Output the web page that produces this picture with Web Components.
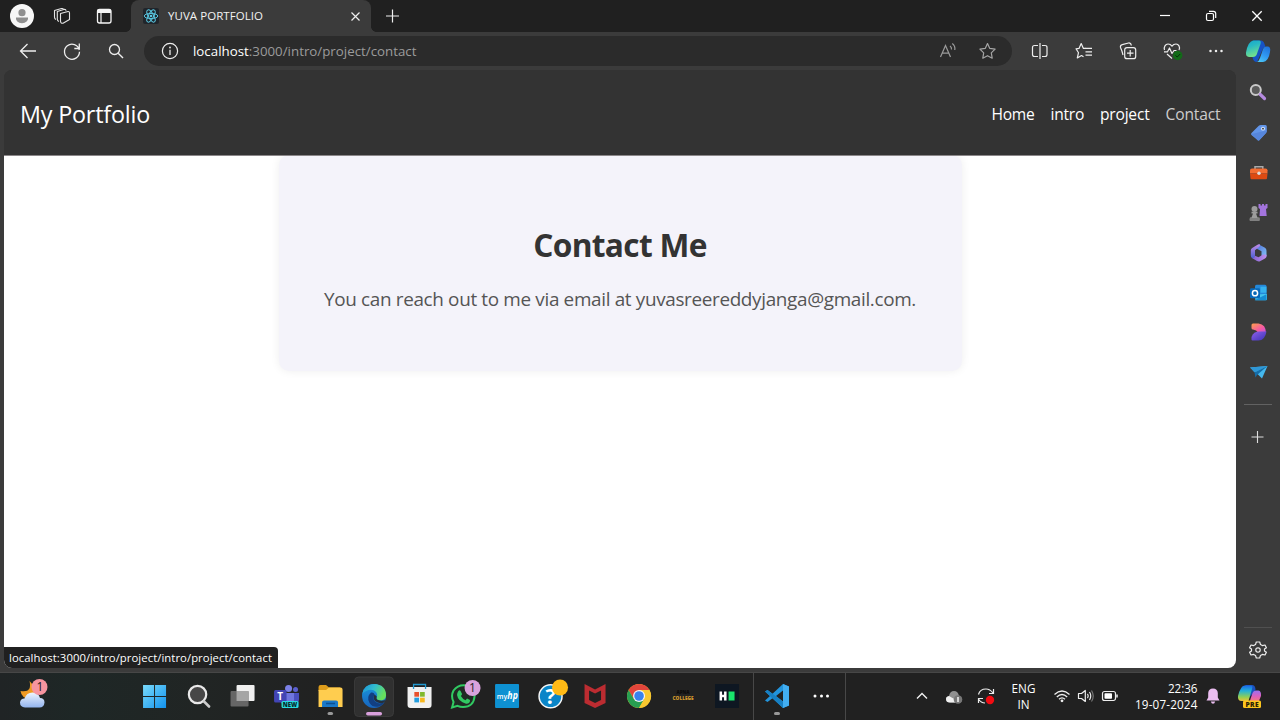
<!DOCTYPE html>
<html lang="en">
<head>
<meta charset="utf-8">
<title>YUVA PORTFOLIO</title>
<style>
html,body{margin:0;height:100%;overflow:hidden;background:#3b3b3b}
body{font-family:"Open Sans","Noto Sans",sans-serif}
</style>
</head>
<body>
<desktop-screen></desktop-screen>
<script>
const ICONS = {
  avatar:`<circle r="12" fill="#f7f7f7"/><circle cy="-3.3" r="3.6" fill="#8f8f8f"/><path d="M-6 1.6h12c.4 3-2 5.6-6 5.6s-6.400-2.600-6-5.600z" fill="#8f8f8f"/>`,
  workspaces:`<g fill="none" stroke="#e4e4e4" stroke-width="1.1" stroke-linejoin="round"><path d="M-1.500-2.500L6-4.500Q7.500-4.700 7.500-3V3.500L1 7.300Q-1.500 7.500-1.500 5z"/><path d="M-3 5.500Q-4.700 5-4.700 3V-4.500L2.500-6.700Q4-6.700 4-5.300"/><path d="M-6 3.500Q-7.500 3-7.500 1V-5.500L-.5-7.500Q1-7.700 1.500-7"/></g>`,
  tabpane:`<rect x="-6.500" y="-6.500" width="13.500" height="13.500" rx="2" fill="none" stroke="#f5f5f5" stroke-width="1.300"/><path d="M-6.500-6.500h13.500v3.500h-13.500z" fill="#f5f5f5"/><path d="M-3-3v10" stroke="#f5f5f5" stroke-width="1.200"/>`,
  react:`<rect x="-8" y="-8" width="16" height="16" rx="2" fill="#20252b"/><g fill="none" stroke="#5ac8e2" stroke-width="1"><ellipse rx="6.800" ry="2.600"/><ellipse rx="6.800" ry="2.600" transform="rotate(60)"/><ellipse rx="6.800" ry="2.600" transform="rotate(120)"/></g><circle r="1.300" fill="#5ac8e2"/>`,
  closetab:`<path d="M-3.500-3.500l8 8M-3.500 4.500l8-8" stroke="#eee" stroke-width="1.200"/>`,
  plus:`<path d="M-6.500 0h13M0-6.500v13" stroke="#eee" stroke-width="1.200"/>`,
  min:`<path d="M-5-.5h10" stroke="#fff" stroke-width="1.200"/>`,
  restore:`<g fill="none" stroke="#fff" stroke-width="1.200"><rect x="-4.500" y="-2.500" width="7" height="7" rx="1.500"/><path d="M-2-4.700H2.500Q4.700-4.700 4.700-2.500V2"/></g>`,
  close:`<path d="M-4.700-4.700l9.400 9.400M4.700-4.700l-9.400 9.400" stroke="#fff" stroke-width="1.300"/>`,
  back:`<path d="M8 0H-7.500M-.500-7L-7.500 0L-.500 7" fill="none" stroke="#eee" stroke-width="1.300"/>`,
  refresh:`<path d="M7.300-1A7.500 7.500 0 1 0 7.500.800M7.300-7.500V-2.500H2.300" fill="none" stroke="#eee" stroke-width="1.300"/>`,
  search:`<circle cx="-1.500" cy="-1.500" r="5" fill="none" stroke="#eee" stroke-width="1.300"/><path d="M2.200 2.200L7 7" stroke="#eee" stroke-width="1.400"/>`,
  info:`<circle r="7.600" fill="none" stroke="#eee" stroke-width="1.200"/><path d="M0-1.200V4" stroke="#eee" stroke-width="1.300"/><circle cy="-3.500" r=".9" fill="#eee"/>`,
  read:`<g fill="none" stroke="#9b9b9b" stroke-width="1.200"><path d="M-8 6L-3-5.500L2 6M-6.300 2.200H.300"/><path d="M1.500-5Q3.300-3.700 3-1.500M3.800-7.500Q7-5 6.300-1"/></g>`,
  star:`<path d="M0-7.500L2.300-2.600L7.600-1.900L3.800 1.900L4.700 7.200L0 4.700L-4.700 7.200L-3.800 1.900L-7.600-1.900L-2.300-2.600Z" fill="none" stroke="#a5a5a5" stroke-width="1.200" stroke-linejoin="round"/>`,
  split:`<g fill="none" stroke="#eee" stroke-width="1.200"><path d="M-2-5.500H-5.500Q-7.500-5.500-7.500-3.500V3.500Q-7.500 5.500-5.500 5.500H-2M2-5.500H5Q7-5.500 7-3.500V3.500Q7 5.500 5 5.500H2M0-8V8"/></g>`,
  favs:`<path d="M1.500-2.600L-.6-2.600L-2.800-7.500L-5-2.600L-8-2.200L-5.500 1.700L-6.700 7L-2.500 4.500L-.5 5.700" fill="none" stroke="#eee" stroke-width="1.200" stroke-linejoin="round"/><path d="M1-2.600H8M1.500.800H8M1.500 4.200H8" stroke="#eee" stroke-width="1.200"/>`,
  collections:`<g fill="none" stroke="#eee" stroke-width="1.200"><rect x="-3.300" y="-3.300" width="11" height="11" rx="2.300"/><path d="M2.200-1V5.500M-1 2.200H5.500"/><path d="M-5 4Q-6-.5-7.500-3.500Q-8-5.800-5.800-6.300L.5-8Q3-8.300 3.300-5.500"/></g>`,
  health:`<g fill="none" stroke="#eee" stroke-width="1.200" stroke-linejoin="round"><path d="M-7.500-1C-8.500-4-6.500-7-4-7Q-1.500-7 0-4.800Q1.500-7 4-7C6.500-7 8.500-4 7-1"/><path d="M-8 .800H-4.500L-2.500-3L0 2.500L2-.5H4.500M-5 3L0 7.500"/></g><circle cx="5.700" cy="4.500" r="4.700" fill="#126b18"/><path d="M3.500 4.500l1.700 1.500L8.200 3" fill="none" stroke="#052d08"/>`,
  dots:`<g fill="#eee"><circle cx="-5.500" r="1.250"/><circle r="1.250"/><circle cx="5.500" r="1.250"/></g>`,
  copilot:`<defs><linearGradient id="a" x1="0" y1="0" x2=".3" y2="1"><stop stop-color="#16a6cc"/><stop offset=".4" stop-color="#28b8c4"/><stop offset="1" stop-color="#73e08b"/></linearGradient><linearGradient id="b" x1=".7" y1="0" x2=".2" y2="1"><stop stop-color="#2174dc"/><stop offset=".5" stop-color="#2f97f2"/><stop offset="1" stop-color="#4bc6f6"/></linearGradient></defs><path d="M-4.500-10.500H3Q5.500-10.500 6.500-7L7.500-4.500L5-2.500L-1 11Q-4.500 11-5.500 6.500Z" fill="#1652c4"/><path d="M-5-10.500H1Q3.500-10.500 2.500-7L-1.500 4Q-2.500 6-5 6H-9Q-12.500 5.500-12 1.500Q-10-9.500-5-10.500Z" fill="url(#a)"/><path d="M8-4.500H10Q13-4 12 1Q10.500 10.500 5 11H-1Q1 10 2 7L5-2Q6-4.500 8-4.500Z" fill="url(#b)"/>`,
  ssearch:`<circle cx="-2.700" cy="-2" r="5" fill="#5a5a5a" stroke="#c9c9c9" stroke-width="2"/><path d="M1.800 2.500L6 6.500" stroke="#b58ae0" stroke-width="3.200" stroke-linecap="round"/>`,
  tag:`<path d="M-7 1L0-6Q1-7 2.500-7H7Q8.300-7 8.300-5.500V-1Q8.300 0 7.500 1L1 8Q0 9-1 8L-7 3Q-8 2-7 1Z" fill="#6295e8"/><path d="M-7 2L8.300-1.500Q8.300 0 7.500 1L1 8Q0 9-1 8Z" fill="#5686dc"/><circle cx="4.500" cy="-3.300" r="1.900" fill="#dce9ff"/><circle cx="4.500" cy="-3.300" r=".9" fill="#333"/>`,
  toolbox:`<path d="M-3.500-3V-5.300H4.300V-3" fill="none" stroke="#aaa" stroke-width="1.500"/><path d="M-8.500-1.800Q-8.500-3.500-6.500-3.500H7Q9-3.500 9-1.800V1.500H-8.500Z" fill="#f36d32"/><path d="M-8.500 1.500H9L8.500 6.300Q8.500 7.300 7.500 7.300H-7Q-8 7.300-8 6.300Z" fill="#dd4a12"/><circle cx=".5" cy="1.300" r="1.700" fill="#ddd"/>`,
  chess:`<path d="M1-8h2v1.500h1.500V-8h2v1.500H8V-8h2V-4L8.500-3L9.200 4H2L2.500-3L1-4Z" fill="#a374dd" transform="translate(-1)"/><g fill="#9c9c9c"><circle cx="-4" cy="-3" r="3"/><path d="M-7-.2H-1V1.500H-2.500L-1 5.500H1Q1.500 9 .5 9H-8Q-9.500 9-8.500 5.500H-7L-5.500 1.500H-7Z"/></g><path d="M-8.500 6H.5V9H-8.500Z" fill="#808080"/>`,
  m365:`<defs><linearGradient id="a" x2="0" y2="1"><stop stop-color="#c08be8"/><stop offset="1" stop-color="#4a5fd0"/></linearGradient><linearGradient id="c" x2="1" y2="1"><stop stop-color="#4c6cd8"/><stop offset="1" stop-color="#84c4f5"/></linearGradient><linearGradient id="b" x2="1"><stop stop-color="#8460d0"/><stop offset="1" stop-color="#bd90ec"/></linearGradient></defs><g transform="translate(0 .7)"><path d="M0-8.500L6.500-5Q8-4 8-2V3.500Q6 5 3 3V-1.500L-2.500-4.500Z" fill="url(#c)"/><path d="M1.500-8.300Q2-6.500 0-5.200L-3.500-2.500V3.500Q-4 7-6.500 5.300Q-7.700 4.500-7.700 2.500V-2.500Q-7.700-4 -6.300-4.800L-1-8Q.5-8.700 1.500-8.300Z" fill="url(#a)"/><path d="M-6.500 5.300Q-4 6-3.500 3L0 4.500L4.500 1.800L8 2V3.500Q8 5 6.500 5.800L1.500 8.500Q0 9-1.500 8.300Z" fill="url(#b)"/></g>`,
  outlook:`<g transform="translate(0 .7)"><rect x="-3.500" y="-8" width="11.500" height="13" rx="1.500" fill="#2489da"/><path d="M2-6H8V0H2Z" fill="#35b2ef"/><path d="M-4 2L8.500 1V6.500Q8.500 7.500 7 7.500H-3Z" fill="#42c2ed"/><path d="M-4 7.500L8 1.500V7.500Z" fill="#158dd4"/><rect x="-8.500" y="-4.500" width="10" height="10" rx="1.200" fill="#0869b9"/><circle cx="-3.500" cy=".5" r="2.600" fill="none" stroke="#fff" stroke-width="1.500"/></g>`,
  designer:`<defs><linearGradient id="a" x2="1" y2="1"><stop stop-color="#ff9f4a"/><stop offset=".6" stop-color="#f458a4"/><stop offset="1" stop-color="#bd54df"/></linearGradient><linearGradient id="b" x2="1" y2="1"><stop stop-color="#8c61ea"/><stop offset="1" stop-color="#3c31b5"/></linearGradient></defs><path d="M-7-7Q-7-8.500-5.500-8.500H0Q7.500-7.500 7.500 1H0Q-2-2.200-5.500-2.500Q-7-2.500-7-4Z" fill="url(#a)"/><path d="M-7 7.500V5Q-5-.5 1-.5H8Q6.500 8.500 0 8.500H-6Q-7 8.500-7 7.500Z" fill="url(#b)"/>`,
  drop:`<path d="M-8.500-4.500L9-6L3.500 6.500L-1 2Z" fill="#45b8ed"/><path d="M-8.500-4.500L9-6L-4 .5Z" fill="#2f97d6"/><path d="M-4 .5L9-6L-1.500 3L-3 5.500Z" fill="#156da8"/>`,
  splus:`<path d="M-6 0H6M0-6V6" stroke="#ddd" stroke-width="1.100"/>`,
  gear:`<path d="M-1.700-8H1.700L2.500-5.400L4.300-4.400L7-5L8.400-2.200L6.500-.900V.900L8.400 2.200L7 5L4.300 4.400L2.500 5.400L1.700 8H-1.700L-2.500 5.400L-4.300 4.400L-7 5L-8.400 2.200L-6.500.900V-.900L-8.400-2.200L-7-5L-4.300-4.400L-2.500-5.400Z" fill="none" stroke="#eee" stroke-width="1.200" stroke-linejoin="round"/><circle r="2.200" fill="none" stroke="#eee" stroke-width="1.200"/>`,
  weather:`<defs><linearGradient id="a" x2="0" y2="1"><stop stop-color="#eef5ff"/><stop offset="1" stop-color="#93b4ee"/></linearGradient></defs><path d="M-3-15Q0-3-12-5Q-11 2-3 3Q6 1 4-7Z" fill="#ef9b25"/><path d="M-7.500 11.500Q-12.500 11-12.500 6.500Q-12 2.500-8 2.500Q-6-3.500 0-3.500Q6-3.500 7.500 2Q12 2 12 6.500Q11.500 11.500 7 11.500Z" fill="url(#a)"/><circle cx="7" cy="-9" r="8" fill="#f7949f"/><text x="7.500" y="-4.800" font-size="12" text-anchor="middle" fill="#1a1a1a">1</text>`,
  windows:`<defs><linearGradient id="a" gradientUnits="userSpaceOnUse" x1="-12" y1="-11" x2="12" y2="12"><stop stop-color="#7bdcfb"/><stop offset="1" stop-color="#1292ee"/></linearGradient></defs><path d="M-11-11H0V0H-11ZM1-11H12V0H1ZM-11 1H0V12H-11ZM1 1H12V12H1Z" fill="url(#a)"/>`,
  tsearch:`<circle cx="-.5" cy="-1.500" r="8.700" fill="#474747" stroke="#e9e9e9" stroke-width="2.200"/><path d="M6 5.500L11 10.500" stroke="#ccc" stroke-width="2.600" stroke-linecap="round"/>`,
  taskview:`<rect x="-5.500" y="-11" width="18" height="16" rx="1" fill="#f0f0f0"/><rect x="-11.500" y="-5" width="18" height="15.500" rx="1" fill="#666"/><path d="M-5.500-5H6.500V5H-5.500Z" fill="#a5a5a5"/>`,
  teams:`<circle cx="2.500" cy="-7.500" r="3.500" fill="#7b80e6"/><circle cx="9.500" cy="-6.500" r="2.500" fill="#5b60cf"/><path d="M3-3H13V3Q13 8 8 8H3Z" fill="#4a4fbd"/><path d="M-5-3H8V4Q8 10 1 10Q-5 10-5 4Z" fill="#7076de"/><rect x="-12" y="-6" width="12.500" height="12.500" rx="1.500" fill="#4245b5"/><text x="-5.800" y="3.800" font-size="10" font-weight="700" fill="#fff" text-anchor="middle">T</text><rect x="-4.500" y="5" width="17" height="7" rx="1.500" fill="#2adbe0"/><text x="4" y="10.800" font-size="6" font-weight="800" fill="#062a2c" text-anchor="middle">NEW</text>`,
  explorer:`<path d="M-11.500-9Q-11.500-11-9.500-11H-4L-1-8.500H10V-5H-11.500Z" fill="#dd9c1b"/><path d="M-11.500-6H-4L-1-8.500H10.500Q12.500-8.500 12.500-6.500V11H-11.500Z" fill="#ffcd4f"/><path d="M-8 11V6.500Q-8 4.500-6 4.500H6Q8 4.500 8 6.500V11Z" fill="#1a78c8"/><path d="M-4 7.500H5" stroke="#0c4f92" stroke-width="1.500"/><rect x="-2.500" y="16" width="5.500" height="3" rx="1.500" fill="#999"/>`,
  edge:`<defs><linearGradient id="a" x2="1" y2=".4"><stop stop-color="#1b91d8"/><stop offset=".5" stop-color="#31bcd0"/><stop offset="1" stop-color="#67df5c"/></linearGradient><linearGradient id="b" x2="0" y2="1"><stop stop-color="#1a98dd"/><stop offset="1" stop-color="#1764bd"/></linearGradient></defs><rect x="-19.500" y="-19" width="39" height="39.500" rx="4" fill="#303030" stroke="#3a3a3a"/><circle r="12" fill="url(#b)"/><path d="M-11.800-2Q-10-12 0-12Q12-11.500 12-.500Q11.500 4.500 6 4.500Q1.500 4 2.500 1.500Q4-1 2-4Q-2-8-8-5Q-11-3.500-11.800-2Z" fill="url(#a)"/><path d="M-3-3.500Q-8 1-4.500 7Q-1 12 5 10.500Q9 9 10.500 6.300Q4 9 .5 5Q-1.500 2 .5-1.500Q0-4-3-3.500Z" fill="#123f82"/><path d="M.5-1.500Q-1.500 2 1 5Q5 8.500 10.500 6.300L11.500 4Q6 5.500 3 3.500Q2 2.500 2.700.5Z" fill="#24303f"/><rect x="-8" y="16" width="16" height="3.500" rx="1.700" fill="#d9a0dc"/>`,
  store:`<path d="M-11.500-9H12.500V9Q12.500 12 9.500 12H-8.500Q-11.500 12-11.500 9Z" fill="#f0f0f0"/><path d="M-5.500-7V-11.500H6.500V-7" fill="none" stroke="#2399d0" stroke-width="1.300"/><path d="M-4.700-4H0V.7H-4.700Z" fill="#e8502b"/><path d="M1-4H5.700V.7H1Z" fill="#80b82b"/><path d="M-4.700 1.700H0V6.400H-4.700Z" fill="#229cdd"/><path d="M1 1.700H5.700V6.400H1Z" fill="#f6b71e"/>`,
  whatsapp:`<path d="M-11 11.500L-9.500 6Q-12.500 0-9.500-5.500Q-5.500-11 1-10.800Q11.500-9.500 11.500.5Q10.500 11 0 11Q-3 11-5.500 9.800Z" fill="#202a24" stroke="#31ca62" stroke-width="2"/><path d="M-5-4.500Q-3.500-6.500-2.500-5L-1-2Q-1.200-1-2.200 0Q-.5 3 2.500 4.200L4 2.500L7 4Q7 8 3 7.700Q-5 5.500-6-1Q-6-3-5-4.500Z" fill="#31ca62"/><circle cx="9.500" cy="-8" r="8" fill="#d9a2dd"/><text x="9.500" y="-3.800" font-size="12" text-anchor="middle" fill="#242424">1</text>`,
  myhp:`<rect x="-12" y="-12" width="24" height="24" rx="1" fill="#0e91d2"/><text x="-10.200" y="2.500" font-size="7" font-weight="600" fill="#fff">my</text><text x=".3" y="3" font-size="11" font-style="italic" font-weight="700" fill="#fff" textLength="10.500" lengthAdjust="spacingAndGlyphs">hp</text>`,
  help:`<circle cx="-.5" cy=".3" r="11.500" fill="#0985c8" stroke="#f5f5f5" stroke-width="1.500"/><text x="-.5" y="8" font-size="21" font-weight="700" text-anchor="middle" fill="#fff">?</text><circle cx="9" cy="-8.500" r="8" fill="#ffba16"/>`,
  mcafee:`<path d="M-10.500-12L0-6.500L10.500-12V7L0 12L-10.500 7ZM-6-5.500V4L0 7L6 4V-5.500L0-2.500Z" fill="#bc2c31" fill-rule="evenodd"/>`,
  chrome:`<circle r="12" fill="#f6c52d"/><path d="M-10.400-6A12 12 0 0 1 10.400-6H0L-5.200 3Z" fill="#e2453b"/><path d="M-10.400-6A12 12 0 0 0 0 12L5.200 3L-5.200 3Z" fill="#279f51"/><path d="M0-6H10.400A12 12 0 0 1 0 12L5.200 3Z" fill="#f8c830"/><circle r="6" fill="#f5f5f5"/><circle r="4.800" fill="#3982ed"/>`,
  apna:`<text x="0" y="-2.200" font-size="5" font-weight="800" text-anchor="middle" fill="#0b0b0b" textLength="13" lengthAdjust="spacingAndGlyphs">APNA</text><text x="0" y="3.600" font-size="5.800" font-weight="800" text-anchor="middle" fill="#d49a2d" textLength="21" lengthAdjust="spacingAndGlyphs">COLLEGE</text>`,
  hacker:`<rect x="-12" y="-12" width="24" height="24" fill="#0e1722"/><path d="M-7.500-4.500H-5V-1.200H-3V-4.500H-.5V4.500H-3V1.200H-5V4.500H-7.500Z" fill="#fff"/><path d="M1.500-4.500H7.500V4.500H1.500Z" fill="#19e66d"/>`,
  vscode:`<path d="M6-12L12-9.500V9.500L6 12L-4.500 2.300L-9.500 6L-12 4.500L-7 0L-12-4.500L-9.500-6L-4.500-2.300ZM6-5.500L-1 0L6 5.500Z" fill="#2294dc" fill-rule="evenodd"/><path d="M6-12L12-9.500V9.500L6 12Z" fill="#42aef1"/><path d="M-9.500-6L6 5.500V12L-12-4.500Z" fill="#1780c4"/><rect x="-3" y="16" width="6" height="3" rx="1.500" fill="#999"/>`,
  tdots:`<g fill="#fff"><circle cx="-6.500" r="1.500"/><circle r="1.500"/><circle cx="6" r="1.500"/></g>`,
  chevron:`<path d="M-5 2.500L0-2.500L5 2.500" fill="none" stroke="#f2f2f2" stroke-width="1.400"/>`,
  cloud:`<g transform="translate(0 1)"><path d="M-4 5.500Q-8 5.500-8 2Q-8-.5-5-1Q-4-6 0-6Q4-6 5-1Q8-.5 8 2.500Q8 5.500 5 5.500Z" fill="#909090"/><path d="M-4 5.500Q-8 5.500-8 2Q-8-.5-5-1L2 3V5.500Z" fill="#f0f0f0"/><circle cx="4" cy="2.500" r="4.300" fill="#777"/><path d="M4 0V5" stroke="#fff" stroke-width="1.400"/></g>`,
  sync:`<g fill="none" stroke="#eee" stroke-width="1.200"><path d="M-7.500-1.500Q-6-7 0-7Q4-7 7-3M7.500-7V-2.500H3M-1 7Q-5 7-7.500 3M-7.500 7V2.500H-3"/></g><circle cx="4" cy="4" r="4.200" fill="#f30c12"/>`,
  wifi:`<g fill="none" stroke="#eee" stroke-width="1.300"><path d="M-7.500-1.500Q0-8.500 7.500-1.500M-5.200 1Q0-4 5.200 1M-3 3.200Q0 .5 3 3.200"/></g><circle cy="4.800" r="1.400" fill="#eee"/>`,
  volume:`<g fill="none" stroke="#eee" stroke-width="1.200" stroke-linejoin="round"><path d="M-7.500-2.500H-4.500L-.7-5.500V5.500L-4.500 2.500H-7.500Z"/><path d="M1.500-2.200Q3 0 1.500 2.200M3.500-4Q6 0 3.500 4"/><path d="M5.500-5.500Q9 0 5.500 5.500" stroke="#777"/></g>`,
  battery:`<rect x="-7.500" y="-4.500" width="13" height="9" rx="2" fill="none" stroke="#eee" stroke-width="1.200"/><rect x="-5.500" y="-2.700" width="7.500" height="5.400" rx=".8" fill="#fff"/><path d="M7-1.500V1.500" stroke="#eee" stroke-width="1.500"/>`,
  bell:`<path d="M-4.800-3Q-4.500-7.500 0-7.500Q4.500-7.500 4.800-3V1.500L6.500 4.500H-6.500L-4.800 1.500Z" fill="#ebbdf0"/><path d="M-2.200 5.500H2.200Q1.500 7.700 0 7.700Q-1.500 7.700-2.200 5.500Z" fill="#ebbdf0"/>`,
  copilotpre:`<defs><linearGradient id="a" x2="0" y2="1"><stop stop-color="#1c68e6"/><stop offset=".35" stop-color="#22b2d8"/><stop offset=".75" stop-color="#91cf53"/><stop offset="1" stop-color="#edc03b"/></linearGradient><linearGradient id="b" x2="0" y2="1"><stop stop-color="#9a70f0"/><stop offset=".5" stop-color="#dd60be"/><stop offset="1" stop-color="#f77d70"/></linearGradient></defs><path d="M-4-11H3Q6-10.500 6-6L-3 5H-9Z" fill="#1b51be"/><path d="M-5-10.500H1.500Q3.500-10.500 2.500-7L-1 5H-8Q-12 5-11.500 0Q-9-10-5-10.500Z" fill="url(#a)"/><path d="M6-5.500H9Q12-5 11.500 0L9 6H0L3-3Q4-5.500 6-5.500Z" fill="url(#b)"/><rect x="-6.500" y="4.500" width="18" height="7.500" rx="1.500" fill="#fcc51e"/><text x="2.700" y="10.800" font-size="6.700" font-weight="800" text-anchor="middle" fill="#2a2104" letter-spacing=".4">PRE</text>`
};

/* <ui-icon name w h>: a cell of w x h pixels, glyph drawn around its centre */
class UiIcon extends HTMLElement {
  connectedCallback() {
    const w = +this.getAttribute('w') || 44, h = +this.getAttribute('h') || 40;
    this.attachShadow({mode:'open'}).innerHTML = `<style>:host{display:block;flex:none;width:${w}px;height:${h}px}svg{display:block;overflow:visible}</style>
      <svg width="${w}" height="${h}" viewBox="${-w/2} ${-h/2} ${w} ${h}">${ICONS[this.getAttribute('name')]}</svg>`;
  }
}
customElements.define('ui-icon', UiIcon);

/* <ui-text fit="px">: one line of text, tracked to a given width */
class UiText extends HTMLElement {
  connectedCallback() {
    this.attachShadow({mode:'open'}).innerHTML = `<style>:host{display:inline-block;white-space:nowrap}span{display:inline-block}</style><span><slot></slot></span>`;
    const fit = +this.getAttribute('fit');
    if (!fit) return;
    const span = this.shadowRoot.querySelector('span');
    const n = this.textContent.length;
    span.style.letterSpacing = (fit - span.getBoundingClientRect().width) / n + 'px';
  }
}
customElements.define('ui-text', UiText);

const define = (tag, html) => {
  const t = document.createElement('template');
  t.innerHTML = html;
  customElements.define(tag, class extends HTMLElement {
    constructor() { super(); this.attachShadow({mode:'open'}).append(t.content.cloneNode(true)); }
  });
};
const row = (list, w, h) => list.split(' ').map(n => `<ui-icon name="${n}" w="${w}" h="${h}"></ui-icon>`).join('');

define('browser-tab', `<style>
  :host{display:flex;align-items:center;width:240px;height:32px;background:#3b3b3b;border-radius:8px 8px 0 0;box-sizing:border-box;padding:0 4px 0 8px;color:#f2f2f2;font-size:11.500px;position:relative}
  :host::before,:host::after{content:"";position:absolute;bottom:0;width:5px;height:5px}
  :host::before{left:-5px;background:radial-gradient(circle at 0 0,transparent 4.500px,#3b3b3b 5px)}
  :host::after{right:-5px;background:radial-gradient(circle at 100% 0,transparent 4.500px,#3b3b3b 5px)}
  .t{flex:1;padding-left:5px;line-height:30px}
</style><ui-icon name="react" w="24" h="32"></ui-icon><div class="t"><slot></slot></div><ui-icon name="closetab" w="24" h="32"></ui-icon>`);

define('title-bar', `<style>
  :host{display:flex;height:32px;background:#202020}.s{flex:1}browser-tab{margin-left:3px}
</style><ui-icon name="avatar" w="44" h="32"></ui-icon><ui-icon name="workspaces" w="36" h="32"></ui-icon><ui-icon name="tabpane" w="48" h="32"></ui-icon>
<browser-tab><ui-text fit="95">YUVA PORTFOLIO</ui-text></browser-tab><ui-icon name="plus" w="43" h="32"></ui-icon><div class="s"></div>${row('min restore close',46,32)}`);

define('address-bar', `<style>
  :host{display:flex;align-items:center;flex:1;height:30px;margin:0 6px;background:#2b2b2b;border-radius:15px;box-sizing:border-box;padding:0 5.500px 0 17px;font-size:13.300px;color:#9b9b9b}
  .u{flex:1;padding-left:14px;line-height:28px}b{font-weight:400;color:#fff}
</style><ui-icon name="info" w="18" h="30"></ui-icon><div class="u"><ui-text fit="223.500"><b>localhost</b>:3000/intro/project/contact</ui-text></div>${row('read star',39,30)}`);

define('tool-bar', `<style>:host{display:flex;align-items:center;height:38px;padding:0 2px 0 6px;background:#3b3b3b}</style>
${row('back refresh search',44,38)}<address-bar></address-bar>${row('split favs collections health dots',44,38)}<ui-icon name="copilot" w="40" h="38"></ui-icon>`);

define('side-bar', `<style>
  :host{display:flex;flex-direction:column;width:44px;box-sizing:border-box;padding-top:2px}
  hr{width:28px;height:1px;border:0;background:#626262;margin:0 auto;flex:none}.first{margin-top:11.600px}.s{flex:1}.last{background:#505050}
</style>${row('ssearch tag toolbox chess m365 outlook designer drop',45,40.05)}<hr class="first"><ui-icon name="splus" w="43" h="64"></ui-icon><div class="s"></div><hr class="last"><ui-icon name="gear" w="44" h="44"></ui-icon>`);

define('site-header', `<style>
  :host{display:flex;align-items:center;justify-content:space-between;height:86px;box-sizing:border-box;padding:3px 15.500px 0 16px;background:#333;color:#fff;border-bottom:1px solid #8b8789}
  .b{font-size:23.300px}nav{display:flex;gap:16px;font-size:15.600px}a{color:#fff}a.cur{color:#ccc}
</style><div class="b"><ui-text fit="130">My Portfolio</ui-text></div><nav><a><ui-text fit="43">Home</ui-text></a><a><ui-text fit="33.500">intro</ui-text></a><a><ui-text fit="49.500">project</ui-text></a><a class="cur"><ui-text fit="55">Contact</ui-text></a></nav>`);

define('contact-card', `<style>
  :host{display:flex;flex-direction:column;align-items:center;width:683px;height:216px;box-sizing:border-box;padding-top:66px;margin:-1px auto 0;background:#f4f3fa;border-radius:10px;box-shadow:0 0 10px rgba(0,0,0,.07);text-align:center}
  h2{margin:0;font-size:31.700px;line-height:48px;color:#333}p{margin:15px 0 0;font-size:18.900px;line-height:30px;color:#555}
</style><h2><ui-text fit="173.500">Contact Me</ui-text></h2><p><ui-text fit="592">You can reach out to me via email at yuvasreereddyjanga@gmail.com.</ui-text></p>`);

define('status-bubble', `<style>
  :host{display:block;position:absolute;left:0;bottom:0;width:274px;height:21px;box-sizing:border-box;padding-left:5px;background:#202020;border-top-right-radius:4px;color:#fff;font-size:11.300px;line-height:21px}
</style><ui-text fit="263">localhost:3000/intro/project/intro/project/contact</ui-text>`);

define('web-page', `<style>
  :host{display:block;flex:1;background:linear-gradient(#333 40px,#fff 40px);border-radius:8px;overflow:hidden;position:relative}
  site-header{position:relative;z-index:1}
</style><site-header></site-header><contact-card></contact-card><status-bubble></status-bubble>`);

define('task-bar', `<style>
  :host{display:flex;height:48px;background:linear-gradient(90deg,#202425,#1e2726 80px,#212524 200px,#212121 340px);color:#fff;font-size:11.700px;box-shadow:inset 0 1px #474747}
  i{width:1px;background:#484848;margin-top:1px}.a{width:67px}.s{flex:1}
  .lang{width:44px;display:flex;flex-direction:column;align-items:center;line-height:15.500px;padding-top:9px;box-sizing:border-box}
  .clock{width:73px;display:flex;flex-direction:column;align-items:flex-end;line-height:16px;padding:8px 1px 0 0;box-sizing:border-box}
</style><ui-icon name="weather" w="65" h="48"></ui-icon><div class="a"></div>
${row('windows tsearch taskview teams explorer edge store whatsapp myhp help mcafee chrome apna hacker',44.1,48)}
<i style="margin-left:3.600px"></i><ui-icon name="vscode" w="46" h="48"></ui-icon><ui-icon name="tdots" w="43" h="48"></ui-icon><i style="margin-left:2px"></i><div class="s"></div>
${row('chevron cloud sync',32,48)}<div class="lang"><ui-text fit="24">ENG</ui-text><ui-text fit="12">IN</ui-text></div>
<ui-icon name="wifi" w="32" h="48"></ui-icon><ui-icon name="volume" w="16" h="48"></ui-icon><ui-icon name="battery" w="32" h="48"></ui-icon>
<div class="clock"><ui-text fit="29.500">22:36</ui-text><ui-text fit="62.500">19-07-2024</ui-text></div>
<ui-icon name="bell" w="28" h="48"></ui-icon><ui-icon name="copilotpre" w="45" h="48"></ui-icon><div style="width:8.500px"></div>`);

define('desktop-screen', `<style>
  :host{display:flex;flex-direction:column;width:1280px;height:720px;background:#3b3b3b;overflow:hidden}
  main{display:flex;flex:1;min-height:0}.v{display:flex;flex:1;padding:0 0 4px 4px}
</style><title-bar></title-bar><tool-bar></tool-bar><main><div class="v"><web-page></web-page></div><side-bar></side-bar></main><task-bar></task-bar>`);
</script>
</body>
</html>
